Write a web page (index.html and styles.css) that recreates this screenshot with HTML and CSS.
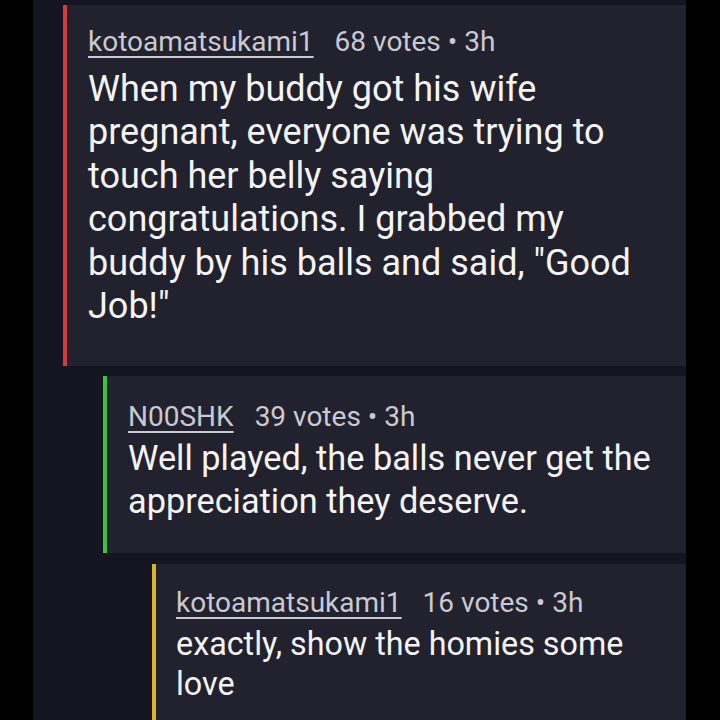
FILE: index.html
```html
<!DOCTYPE html>
<html>
<head>
<meta charset="utf-8">
<link rel="stylesheet" href="styles.css">
</head>
<body>
<div class="thread">
  <div class="comment depth-0">
    <div class="meta"><span class="user">kotoamatsukami1</span><span class="info">68 votes • 3h</span></div>
    <div class="body">When my buddy got his wife pregnant, everyone was trying to touch her belly saying congratulations. I grabbed my buddy by his balls and said, "Good Job!"</div>
  </div>
  <div class="comment depth-1">
    <div class="meta"><span class="user">N00SHK</span><span class="info">39 votes • 3h</span></div>
    <div class="body">Well played, the balls never get the appreciation they deserve.</div>
  </div>
  <div class="comment depth-2">
    <div class="meta"><span class="user">kotoamatsukami1</span><span class="info">16 votes • 3h</span></div>
    <div class="body">exactly, show the homies some love</div>
  </div>
</div>
</body>
</html>
```

FILE: styles.css
```css
html, body {
  margin: 0;
  padding: 0;
  background: #000;
}
body {
  font-family: Roboto, "Liberation Sans", sans-serif;
  width: 720px;
  height: 720px;
  overflow: hidden;
}
.thread {
  margin-left: 33px;
  width: 653px;
  height: 720px;
  background: #151522;
  padding-top: 5px;
  box-sizing: border-box;
  display: flex;
  flex-direction: column;
  gap: 10.5px;
}
.comment {
  background: #22222e;
  border-left: 4px solid #d63a3a;
  padding: 21.5px 26px 30px 21px;
  flex-shrink: 0;
}
.meta {
  font-size: 28px;
  line-height: 36px;
  color: #c9c9d2;
  margin-bottom: 2.5px;
}
.user {
  text-decoration: underline;
  text-underline-offset: 5px;
  text-decoration-thickness: 2px;
  margin-right: 21px;
}
.body {
  color: #f4f4f6;
}
.depth-0 {
  margin-left: 30px;
  padding-top: 19px;
  padding-bottom: 36.5px;
}
.depth-0 .meta { margin-bottom: 7.5px; }
.depth-0 .body { font-size: 36px; line-height: 43.6px; }
.depth-1 {
  margin-left: 70px;
  border-left-color: #3cc23c;
  padding-top: 22.5px;
}
.depth-1 .body { font-size: 34.3px; line-height: 43px; }
.depth-2 {
  margin-left: 119px;
  padding-left: 20px;
  border-left-color: #d4b62c;
}
.depth-2 .body { font-size: 32.3px; line-height: 40px; }
```
